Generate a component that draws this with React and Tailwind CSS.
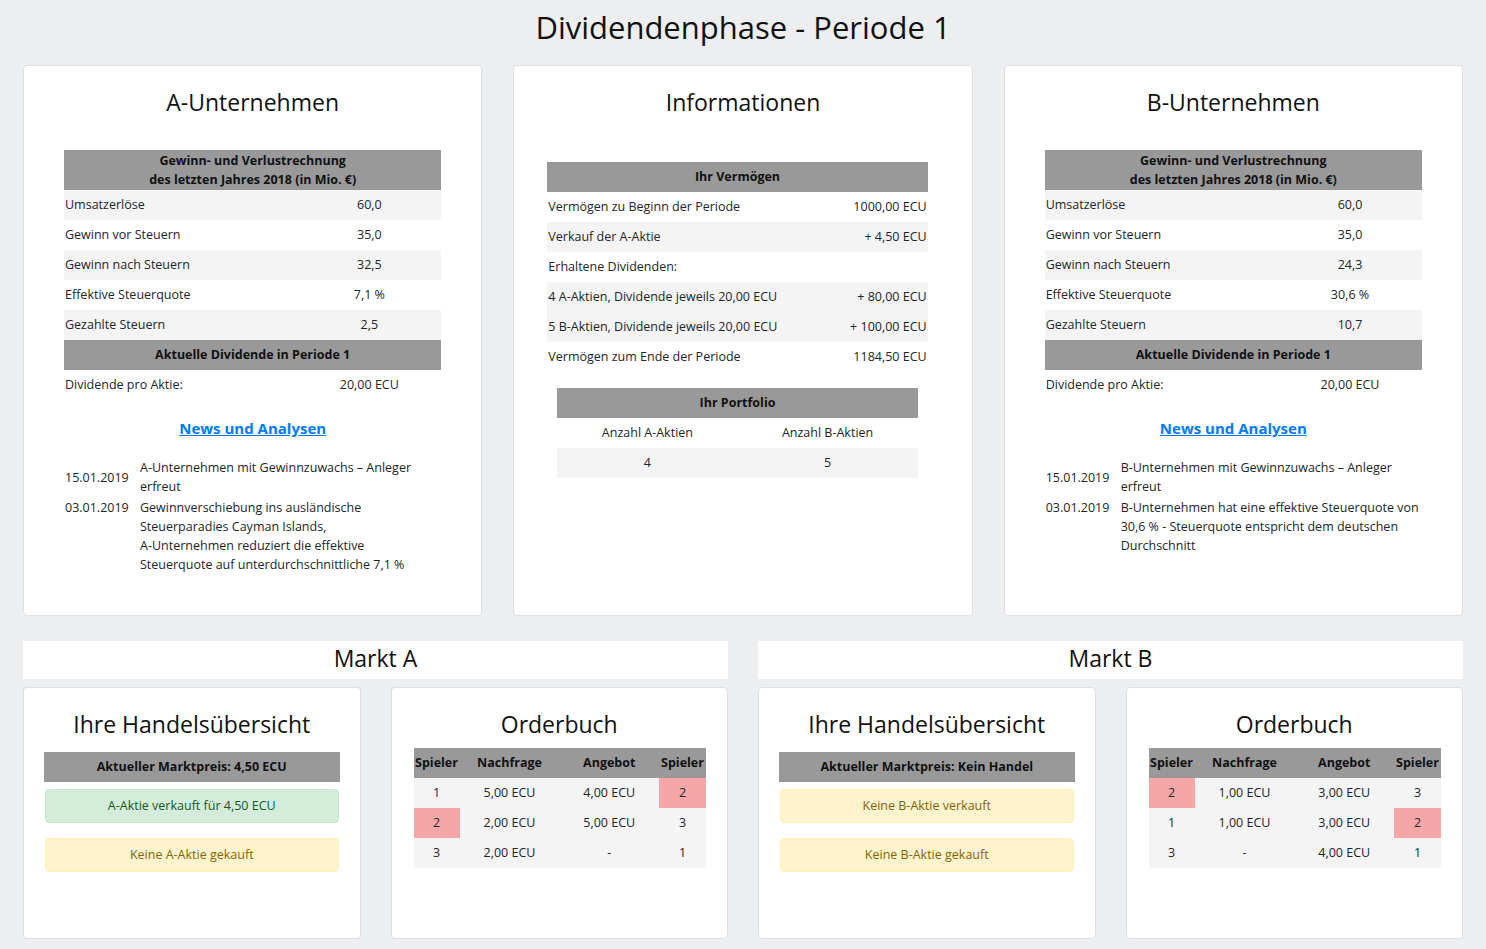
import React from 'react';

const guvA = [
  ['Umsatzerlöse', '60,0'],
  ['Gewinn vor Steuern', '35,0'],
  ['Gewinn nach Steuern', '32,5'],
  ['Effektive Steuerquote', '7,1 %'],
  ['Gezahlte Steuern', '2,5'],
];

const guvB = [
  ['Umsatzerlöse', '60,0'],
  ['Gewinn vor Steuern', '35,0'],
  ['Gewinn nach Steuern', '24,3'],
  ['Effektive Steuerquote', '30,6 %'],
  ['Gezahlte Steuern', '10,7'],
];

const vermoegen = [
  ['Vermögen zu Beginn der Periode', '1000,00 ECU', false],
  ['Verkauf der A-Aktie', '+ 4,50 ECU', true],
  ['Erhaltene Dividenden:', '', false],
  ['4 A-Aktien, Dividende jeweils 20,00 ECU', '+ 80,00 ECU', true],
  ['5 B-Aktien, Dividende jeweils 20,00 ECU', '+ 100,00 ECU', true],
  ['Vermögen zum Ende der Periode', '1184,50 ECU', false],
];

// [spieler, nachfrage, angebot, spieler, hlLeft, hlRight]
const orderA = [
  ['1', '5,00 ECU', '4,00 ECU', '2', false, true],
  ['2', '2,00 ECU', '5,00 ECU', '3', true, false],
  ['3', '2,00 ECU', '-', '1', false, false],
];

const orderB = [
  ['2', '1,00 ECU', '3,00 ECU', '3', true, false],
  ['1', '1,00 ECU', '3,00 ECU', '2', false, true],
  ['3', '-', '4,00 ECU', '1', false, false],
];

const Card = ({ className = '', children }) => (
  <div className={`bg-white border border-[#dcdfe3] rounded-[4px] ${className}`}>{children}</div>
);

const CardTitle = ({ children }) => (
  <h2 className="text-[23px] font-medium leading-[30px] text-center text-[#111]">{children}</h2>
);

const GrayHead = ({ children, className = '' }) => (
  <div className={`bg-[#999999] text-center font-bold text-[12.5px] text-[#111] ${className}`}>{children}</div>
);

const Company = ({ title, guv, news }) => (
  <Card className="h-[551px] pt-[21px]">
    <CardTitle>{title}</CardTitle>
    <div className="mx-[40px] mt-[33px] text-[12.5px]">
      <GrayHead className="py-[1px] leading-[19px]">
        Gewinn- und Verlustrechnung
        <br />
        des letzten Jahres 2018 (in Mio. €)
      </GrayHead>
      {guv.map(([label, value], i) => (
        <div key={label} className={`flex h-[30px] items-center pt-[1px] ${i % 2 === 0 ? 'bg-[#f4f4f4]' : ''}`}>
          <div className="flex-1 pl-[1px]">{label}</div>
          <div className="w-[144px] text-center">{value}</div>
        </div>
      ))}
      <GrayHead className="h-[30px] leading-[30px]">Aktuelle Dividende in Periode 1</GrayHead>
      <div className="flex h-[30px] items-center pt-[1px]">
        <div className="flex-1 pl-[1px]">Dividende pro Aktie:</div>
        <div className="w-[144px] text-center">20,00 ECU</div>
      </div>
      <div className="mt-[18px] text-center leading-[20px]">
        <a href="#" className="text-[15px] font-bold text-[#007bff] underline">
          News und Analysen
        </a>
      </div>
      <div className="mt-[17px] leading-[19px]">
        {news.map(([date, lines], i) => (
          <div key={date} className={`flex py-[1px] ${i === 0 ? 'items-center' : 'items-start'}`}>
            <div className="w-[76px] pl-[1px]">{date}</div>
            <div className="flex-1">
              {lines.map((l) => (
                <div key={l} className="whitespace-nowrap">{l}</div>
              ))}
            </div>
          </div>
        ))}
      </div>
    </div>
  </Card>
);

const Informationen = () => (
  <Card className="h-[551px] pt-[21px]">
    <CardTitle>Informationen</CardTitle>
    <div className="pl-[33px] pr-[44px] mt-[45px] text-[12.5px]">
      <GrayHead className="h-[30px] leading-[30px]">Ihr Vermögen</GrayHead>
      {vermoegen.map(([label, value, striped]) => (
        <div key={label} className={`flex h-[30px] items-center ${striped ? 'bg-[#f4f4f4]' : ''}`}>
          <div className="flex-1 pl-[1px]">{label}</div>
          <div className="pr-[1px] text-right">{value}</div>
        </div>
      ))}
      <div className="mx-[10px] mt-[16px]">
        <GrayHead className="h-[30px] leading-[30px]">Ihr Portfolio</GrayHead>
        <div className="flex h-[30px] items-center text-center">
          <div className="flex-1">Anzahl A-Aktien</div>
          <div className="flex-1">Anzahl B-Aktien</div>
        </div>
        <div className="flex h-[30px] items-center text-center bg-[#f4f4f4]">
          <div className="flex-1">4</div>
          <div className="flex-1">5</div>
        </div>
      </div>
    </div>
  </Card>
);

const Handel = ({ price, alerts }) => (
  <Card className="h-[252px] pt-[21px]">
    <CardTitle>Ihre Handelsübersicht</CardTitle>
    <div className="mx-[20px] mt-[13px] text-[12.5px]">
      <GrayHead className="h-[30px] leading-[30px]">Aktueller Marktpreis: {price}</GrayHead>
      {alerts.map(([text, green], i) => (
        <div
          key={text}
          className={`mx-[1px] h-[34px] flex items-center justify-center rounded-[4px] border pt-[1px] ${
            i === 0 ? 'mt-[7px]' : 'mt-[15px]'
          } ${
            green
              ? 'bg-[#d4edda] border-[#c3e6cb] text-[#155724]'
              : 'bg-[#fff3cd] border-[#ffeeba] text-[#856404]'
          }`}
        >
          {text}
        </div>
      ))}
    </div>
  </Card>
);

const Orderbuch = ({ rows }) => (
  <Card className="h-[252px] pt-[21px]">
    <CardTitle>Orderbuch</CardTitle>
    <div className="ml-[22px] mr-[21px] mt-[9px] text-[12.5px]">
      <div className="flex h-[30px] items-center bg-[#999999] font-bold text-[#111]">
        <div className="w-[46px] text-center">Spieler</div>
        <div className="w-[100px] text-center">Nachfrage</div>
        <div className="flex-1 text-center">Angebot</div>
        <div className="w-[47px] text-center">Spieler</div>
      </div>
      {rows.map(([s1, n, a, s2, hl, hr], i) => (
        <div key={i} className="flex h-[30px] bg-[#f4f4f4]">
          <div className={`w-[46px] flex items-center justify-center ${hl ? 'bg-[#f5a7a7]' : ''}`}>{s1}</div>
          <div className="w-[100px] flex items-center justify-center">{n}</div>
          <div className="flex-1 flex items-center justify-center">{a}</div>
          <div className={`w-[47px] flex items-center justify-center ${hr ? 'bg-[#f5a7a7]' : ''}`}>{s2}</div>
        </div>
      ))}
    </div>
  </Card>
);

const Markt = ({ name, price, alerts, rows }) => (
  <div className="flex flex-col">
    <div className="bg-white h-[38px] flex items-center justify-center pb-[3px] text-[23px] font-medium text-[#111]">
      {name}
    </div>
    <div className="mt-[8px] grid grid-cols-2 gap-[30px]">
      <Handel price={price} alerts={alerts} />
      <Orderbuch rows={rows} />
    </div>
  </div>
);

export default function App() {
  return (
    <div className="min-h-[949px] bg-[#eceef0] px-[23px] font-['Segoe_UI','Open_Sans',sans-serif] text-[#212529]">
      <h1 className="h-[65px] pt-[7px] text-center text-[31px] font-medium leading-[40px] text-[#111]">
        Dividendenphase - Periode 1
      </h1>
      <div className="grid grid-cols-3 gap-[31px]">
        <Company
          title="A-Unternehmen"
          guv={guvA}
          news={[
            ['15.01.2019', ['A-Unternehmen mit Gewinnzuwachs – Anleger', 'erfreut']],
            [
              '03.01.2019',
              [
                'Gewinnverschiebung ins ausländische',
                'Steuerparadies Cayman Islands,',
                'A-Unternehmen reduziert die effektive',
                'Steuerquote auf unterdurchschnittliche 7,1 %',
              ],
            ],
          ]}
        />
        <Informationen />
        <Company
          title="B-Unternehmen"
          guv={guvB}
          news={[
            ['15.01.2019', ['B-Unternehmen mit Gewinnzuwachs – Anleger', 'erfreut']],
            [
              '03.01.2019',
              [
                'B-Unternehmen hat eine effektive Steuerquote von',
                '30,6 % - Steuerquote entspricht dem deutschen',
                'Durchschnitt',
              ],
            ],
          ]}
        />
      </div>
      <div className="mt-[25px] grid grid-cols-2 gap-[30px]">
        <Markt
          name="Markt A"
          price="4,50 ECU"
          alerts={[
            ['A-Aktie verkauft für 4,50 ECU', true],
            ['Keine A-Aktie gekauft', false],
          ]}
          rows={orderA}
        />
        <Markt
          name="Markt B"
          price="Kein Handel"
          alerts={[
            ['Keine B-Aktie verkauft', false],
            ['Keine B-Aktie gekauft', false],
          ]}
          rows={orderB}
        />
      </div>
    </div>
  );
}
